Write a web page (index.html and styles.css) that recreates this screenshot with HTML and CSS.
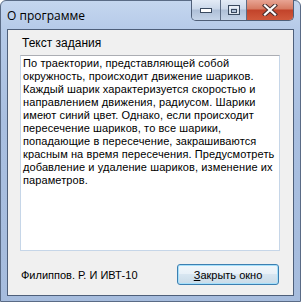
FILE: index.html
```html
<!DOCTYPE html>
<html lang="ru">
<head>
  <meta charset="UTF-8">
  <title>О программе</title>
  <link rel="stylesheet" href="styles.css">
</head>
<body>
  <div class="window">
    <div class="titlebar">
      <span class="title">О программе</span>
      <div class="caption-buttons">
        <div class="cap-btn cap-min">
          <svg width="14" height="8" viewBox="0 0 14 8"><rect x="1.5" y="2.5" width="11" height="4" fill="#fff" stroke="#3a4a60"/></svg>
        </div>
        <div class="cap-btn cap-max">
          <svg width="14" height="12" viewBox="0 0 14 12"><rect x="1.5" y="1.5" width="11" height="9" fill="none" stroke="#3a4a60"/><rect x="3" y="3" width="8" height="6" fill="none" stroke="#fff" stroke-width="1"/><rect x="4.5" y="5.5" width="5" height="3" fill="none" stroke="#3a4a60"/></svg>
        </div>
        <div class="cap-btn cap-close">
          <svg width="16" height="12" viewBox="0 0 16 12"><path d="M3 1.5 L13 10.5 M13 1.5 L3 10.5" stroke="#4a3030" stroke-width="4.2" stroke-linecap="square"/><path d="M3 1.5 L13 10.5 M13 1.5 L3 10.5" stroke="#fff" stroke-width="2.2" stroke-linecap="square"/></svg>
        </div>
      </div>
    </div>
    <div class="client">
      <div class="caption-label">Текст задания</div>
      <div class="task-box">По траектории, представляющей собой<br>окружность, происходит движение шариков.<br>Каждый шарик характеризуется скоростью и<br>направлением движения, радиусом. Шарики<br>имеют синий цвет. Однако, если происходит<br>пересечение шариков, то все шарики,<br>попадающие в пересечение, закрашиваются<br>красным на время пересечения. Предусмотреть<br>добавление и удаление шариков, изменение их<br>параметров.</div>
      <div class="footer">
        <span class="author">Филиппов. Р. И ИВТ-10</span>
        <button class="close-btn"><u>З</u>акрыть окно</button>
      </div>
    </div>
  </div>
</body>
</html>
```

FILE: styles.css
```css
body {
  margin: 0;
  background: #fff;
  font-family: "Liberation Sans", Arial, sans-serif;
}
.window {
  width: 301px;
  height: 302px;
  box-sizing: border-box;
  border: 1px solid #5a6b86;
  border-radius: 6px 6px 0 0;
  background: linear-gradient(180deg, #c4d6ef 0px, #b5cae8 30px, #a9bfe0 120px, #a6bcdd 302px);
  padding: 0 6px 5px 6px;
  display: flex;
  flex-direction: column;
}
.titlebar {
  height: 28px;
  display: flex;
  justify-content: space-between;
  align-items: flex-start;
}
.title {
  font-family: "Open Sans", "DejaVu Sans", sans-serif;
  font-size: 12px;
  color: #000;
  margin-top: 6px;
}
.caption-buttons {
  display: flex;
  margin-top: -1px;
  border: 1px solid #4f5f78;
  border-top: none;
  border-radius: 0 0 5px 5px;
  overflow: hidden;
  height: 20px;
}
.cap-btn {
  display: flex;
  align-items: center;
  justify-content: center;
}
.cap-min,
.cap-max {
  width: 28px;
  background: linear-gradient(180deg, #e3ebf6 0%, #cbd8ea 45%, #aebfd7 50%, #c5d4e8 100%);
  border-right: 1px solid #5d6d86;
}
.cap-max {
  width: 25px;
}
.cap-close {
  width: 46px;
  background: linear-gradient(180deg, #e8a493 0%, #d67a62 45%, #c2432a 50%, #d0593c 100%);
}
.client {
  flex: 1;
  background: #f0f0f0;
  border: 1px solid #4e5f7a;
  padding: 6px 0 0 12px;
  display: flex;
  flex-direction: column;
}
.caption-label {
  font-size: 12px;
  color: #000;
  margin-left: 2px;
  height: 19px;
}
.task-box {
  width: 260px;
  height: 196px;
  box-sizing: border-box;
  background: #fff;
  border: 1px solid #c6d6e8;
  border-top-color: #abadb3;
  padding: 1px 2px;
  font-size: 11px;
  letter-spacing: 0.1px;
  line-height: 13px;
  white-space: nowrap;
  overflow: hidden;
  color: #000;
}
.footer {
  display: flex;
  justify-content: space-between;
  align-items: center;
  margin-top: 13px;
  width: 259px;
}
.author {
  font-size: 11px;
  margin-left: 1px;
}
.close-btn {
  width: 102px;
  height: 21px;
  padding: 0;
  font-family: "Liberation Sans", Arial, sans-serif;
  font-size: 11px;
  color: #000;
  border: 1px solid #3c7fb1;
  border-radius: 3px;
  background: linear-gradient(180deg, #f2f7fb 0%, #e8f1f8 45%, #d8e6f1 50%, #c9dbe8 100%);
  box-shadow: inset 0 0 0 1px #a6e0fb;
}
```
